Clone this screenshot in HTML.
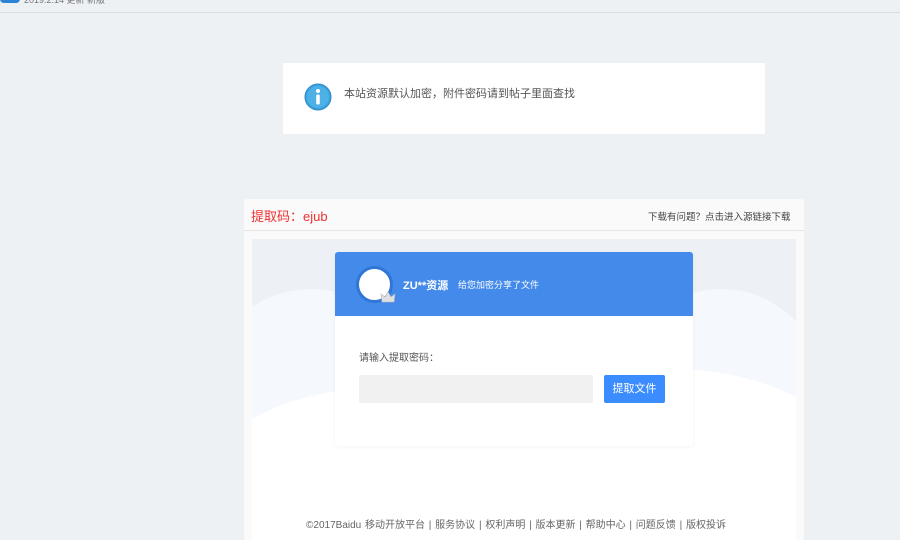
<!DOCTYPE html>
<html><head><meta charset="utf-8"><style>
*{margin:0;padding:0;box-sizing:border-box}
html,body{width:900px;height:540px;overflow:hidden}
body{background:#eef1f4;font-family:"Liberation Sans","Noto Sans CJK SC",sans-serif;position:relative}
.a{position:absolute}
</style></head><body>
<div class="a" style="left:0;top:0;width:900px;height:13px;border-bottom:1px solid #d9dde2;background:#eef1f4;overflow:hidden">
<div class="a" style="left:0;top:-6px;width:20px;height:9px;background:#2d84d4;border-radius:0 0 4px 4px"></div>
<div class="a" style="left:24px;top:-7px;font-size:9px;color:#777">2019.2.14 更新 新版</div>
</div>

<div class="a" style="left:283px;top:63px;width:482px;height:71px;background:#fff"></div>
<svg class="a" style="left:304px;top:83px" width="28" height="28" viewBox="0 0 28 28"><circle cx="14" cy="14" r="13" fill="#3aa3dd" stroke="#2b88c4"/><circle cx="14" cy="14" r="11" fill="#4db0e6"/><circle cx="14" cy="8" r="2" fill="#fff"/><rect x="12.2" y="11.5" width="3.6" height="10" rx="1.5" fill="#fff"/></svg>
<div class="a" style="left:344px;top:85px;font-size:11px;color:#555">本站资源默认加密，附件密码请到帖子里面查找</div>

<div class="a" style="left:244px;top:199px;width:560px;height:341px;background:#fafafa;border-radius:3px"></div>
<div class="a" style="left:244px;top:230px;width:560px;height:1px;background:#e5e5e5"></div>
<div class="a" style="left:251px;top:206px;font-size:13px;color:#f03030">提取码：ejub</div>
<div class="a" style="left:648px;top:209px;font-size:9.5px;color:#444">下载有问题？点击进入源链接下载</div>

<div class="a" style="left:252px;top:239px;width:544px;height:301px;background:#edf0f5;overflow:hidden">
<svg width="544" height="301" style="position:absolute;left:0;top:0"><g fill="#f5f8fc"><circle cx="60" cy="160" r="110"/><circle cx="470" cy="150" r="100"/></g><g fill="#ffffff"><ellipse cx="120" cy="300" rx="200" ry="150"/><ellipse cx="420" cy="290" rx="220" ry="160"/><rect x="0" y="230" width="544" height="71"/></g></svg>
</div>

<div class="a" style="left:335px;top:252px;width:358px;height:194px;background:#fff;border-radius:3px;box-shadow:0 1px 4px rgba(0,0,0,.05)"></div>
<div class="a" style="left:335px;top:252px;width:358px;height:64px;background:#448aea;border-radius:3px 3px 0 0"></div>
<div class="a" style="left:356px;top:266px;width:37px;height:37px;border-radius:50%;background:#fff;border:3px solid #2f76d6"></div>
<svg class="a" style="left:380px;top:290px" width="16" height="14" viewBox="0 0 16 14"><path d="M2 12 L1 4 L5 7 L8 2 L11 7 L15 4 L14 12 Z" fill="#e0e0e0" stroke="#bbb" stroke-width=".6"/></svg>
<div class="a" style="left:403px;top:277px;font-size:11px;color:#fff;font-weight:bold">ZU**资源</div>
<div class="a" style="left:458px;top:278px;font-size:9px;color:#fff">给您加密分享了文件</div>
<div class="a" style="left:359px;top:349px;font-size:10px;color:#555">请输入提取密码：</div>
<div class="a" style="left:359px;top:375px;width:234px;height:28px;background:#f1f1f1;border-radius:2px"></div>
<div class="a" style="left:604px;top:375px;width:61px;height:28px;background:#3b8cff;border-radius:2px;color:#fff;font-size:11px;line-height:28px;text-align:center">提取文件</div>
<div class="a" style="left:244px;top:516px;width:544px;text-align:center;font-size:10px;color:#666;word-spacing:1px">©2017Baidu 移动开放平台 | 服务协议 | 权利声明 | 版本更新 | 帮助中心 | 问题反馈 | 版权投诉</div>
</body></html>
